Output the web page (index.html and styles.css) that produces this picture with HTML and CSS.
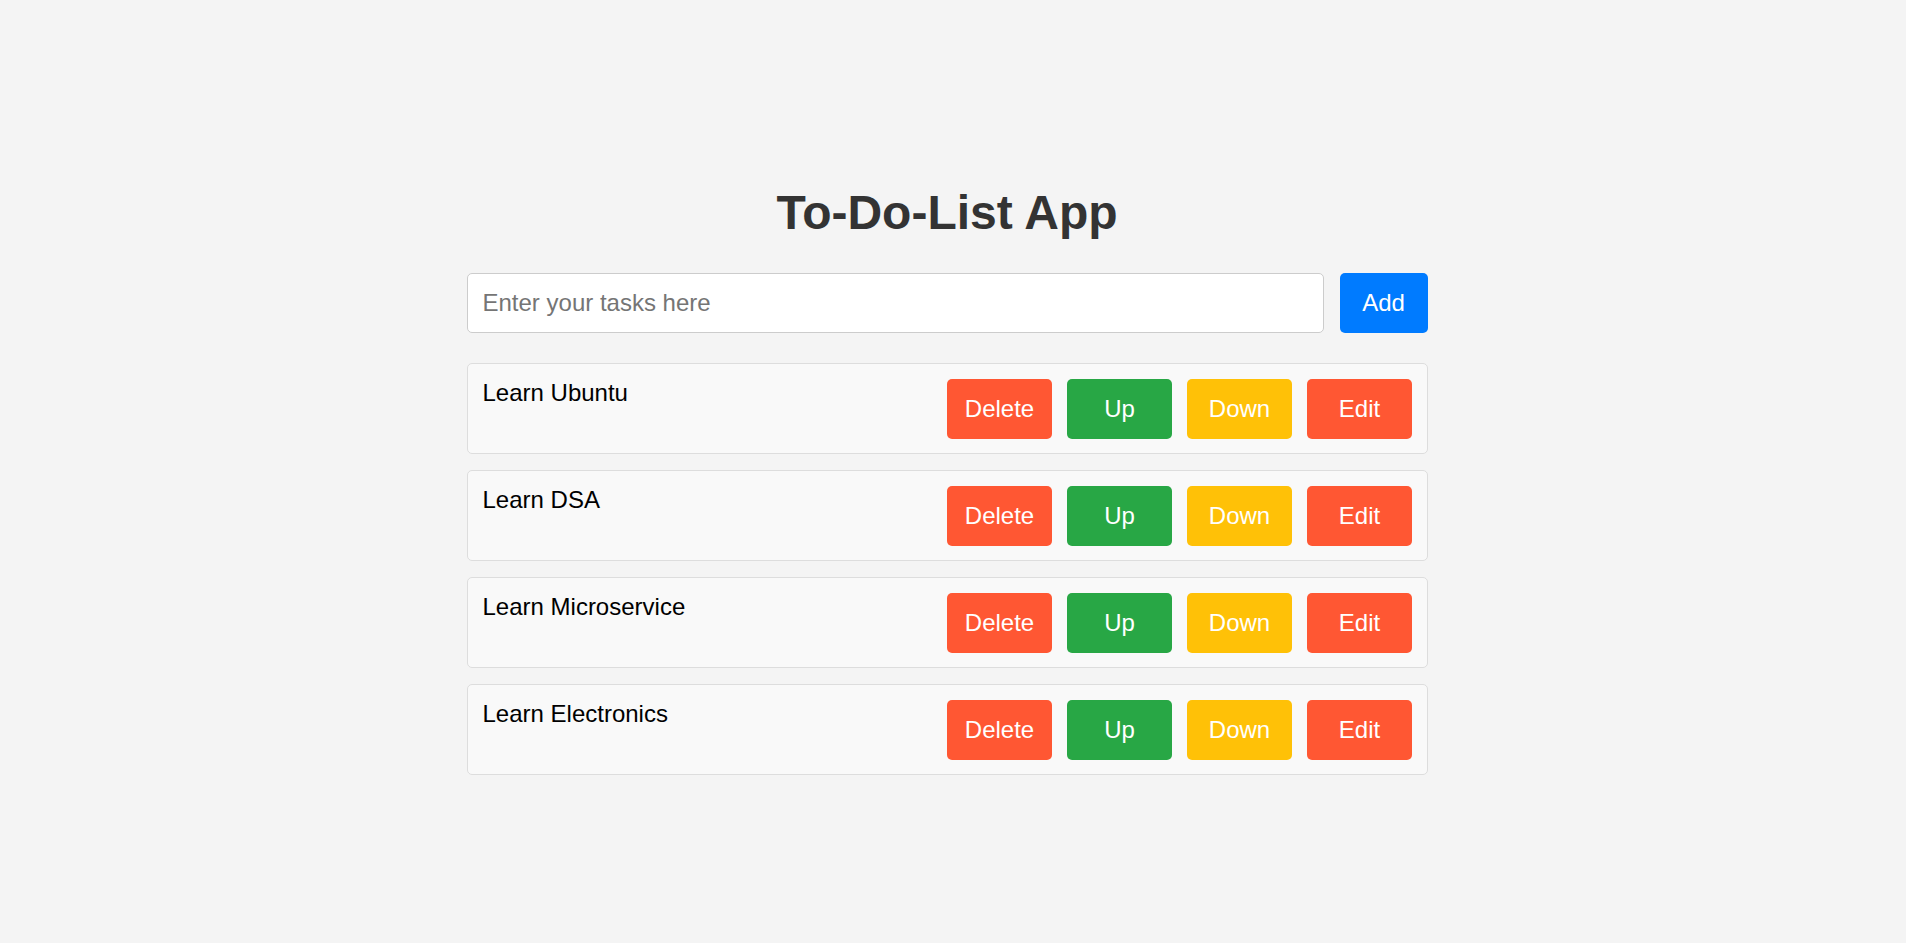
FILE: index.html
```html
<!DOCTYPE html>
<html lang="en">
<head>
<meta charset="UTF-8">
<title>To-Do-List App</title>
<link rel="stylesheet" href="styles.css">
</head>
<body>
<div class="app">
  <h1 class="title">To-Do-List App</h1>
  <div class="entry">
    <input class="task-input" type="text" placeholder="Enter your tasks here">
    <button class="btn btn-add">Add</button>
  </div>
  <ul class="task-list">
    <li class="task">
      <span class="task-text">Learn Ubuntu</span>
      <div class="actions">
        <button class="btn btn-action btn-delete">Delete</button>
        <button class="btn btn-action btn-up">Up</button>
        <button class="btn btn-action btn-down">Down</button>
        <button class="btn btn-action btn-edit">Edit</button>
      </div>
    </li>
    <li class="task">
      <span class="task-text">Learn DSA</span>
      <div class="actions">
        <button class="btn btn-action btn-delete">Delete</button>
        <button class="btn btn-action btn-up">Up</button>
        <button class="btn btn-action btn-down">Down</button>
        <button class="btn btn-action btn-edit">Edit</button>
      </div>
    </li>
    <li class="task">
      <span class="task-text">Learn Microservice</span>
      <div class="actions">
        <button class="btn btn-action btn-delete">Delete</button>
        <button class="btn btn-action btn-up">Up</button>
        <button class="btn btn-action btn-down">Down</button>
        <button class="btn btn-action btn-edit">Edit</button>
      </div>
    </li>
    <li class="task">
      <span class="task-text">Learn Electronics</span>
      <div class="actions">
        <button class="btn btn-action btn-delete">Delete</button>
        <button class="btn btn-action btn-up">Up</button>
        <button class="btn btn-action btn-down">Down</button>
        <button class="btn btn-action btn-edit">Edit</button>
      </div>
    </li>
  </ul>
</div>
</body>
</html>
```
FILE: styles.css
```css
* {
  box-sizing: border-box;
}

html, body {
  margin: 0;
  height: 100%;
}

body {
  background: #f4f4f4;
  font-family: "Liberation Sans", Arial, sans-serif;
  padding: 0 12px 0 0;
  overflow: hidden;
}

.app {
  width: 961px;
  margin: 0 auto;
  padding-top: 186px;
}

.title {
  margin: 0;
  font-size: 48px;
  line-height: 54px;
  font-weight: bold;
  color: #333;
  text-align: center;
}

.entry {
  display: flex;
  gap: 16px;
  margin-top: 33px;
}

.task-input {
  flex: 1;
  height: 60px;
  border: 1px solid #ccc;
  border-radius: 5px;
  background: #fff;
  padding: 0 15px;
  font-family: "Liberation Sans", Arial, sans-serif;
  font-size: 24px;
  color: #333;
  outline: none;
}

.task-input::placeholder {
  color: #757575;
}

.btn {
  border: none;
  border-radius: 5px;
  color: #fff;
  font-family: "Liberation Sans", Arial, sans-serif;
  font-size: 24px;
  height: 60px;
  padding: 0;
  cursor: pointer;
}

.btn-add {
  width: 88px;
  background: #007bff;
}

.task-list {
  list-style: none;
  margin: 30px 0 0;
  padding: 0;
  display: flex;
  flex-direction: column;
  gap: 16px;
}

.task {
  display: flex;
  justify-content: space-between;
  align-items: flex-start;
  background: #f9f9f9;
  border: 1px solid #ddd;
  border-radius: 5px;
  padding: 14.5px 14.5px 14.5px 15px;
}

.task-text {
  font-size: 24px;
  line-height: 27px;
  color: #000;
}

.actions {
  display: flex;
  gap: 15px;
}

.btn-action {
  width: 105px;
}

.btn-delete,
.btn-edit {
  background: #ff5733;
}

.btn-up {
  background: #28a745;
}

.btn-down {
  background: #ffc107;
}
```
